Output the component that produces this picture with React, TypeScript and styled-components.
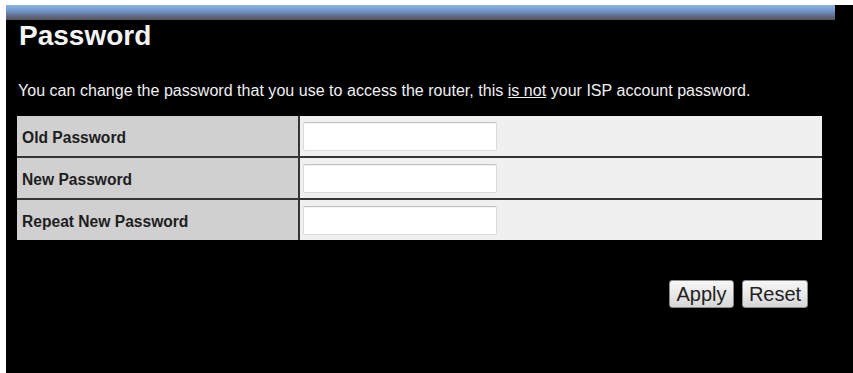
import React from "react";
import styled, { createGlobalStyle } from "styled-components";

const GlobalStyle = createGlobalStyle`
  html, body {
    margin: 0;
    padding: 0;
    background: #ffffff;
  }
  body {
    font-family: "Liberation Sans", Arial, sans-serif;
  }
`;

const Page = styled.div`
  box-sizing: border-box;
  padding: 5px 0 0 6px;
  height: 100vh;
  display: flex;
`;

const Panel = styled.div`
  flex: 1;
  background: #000;
  display: flex;
  flex-direction: column;
`;

const TopBar = styled.div`
  width: 829px;
  height: 15px;
  background: linear-gradient(to bottom, #8fb3e8 0%, #6e8fc4 45%, #5d6478 80%, #55565c 100%);
`;

const Title = styled.h1`
  margin: 2px 0 0 13px;
  font-size: 28px;
  line-height: 28px;
  font-weight: bold;
  color: #f4f4f4;
`;

const Intro = styled.p`
  margin: 32px 0 0 12px;
  font-size: 16px;
  line-height: 17px;
  color: #f0f0f0;
  letter-spacing: 0.03px;

  u {
    text-decoration: underline;
  }
`;

const FormTable = styled.div`
  margin: 17px 0 0 11px;
  width: 805px;
  display: grid;
  grid-template-columns: 281px 1fr;
  grid-auto-rows: 40px;
  gap: 2px;
  background: #353535;
`;

const Label = styled.div`
  background: #d0d0d0;
  color: #1e1e1e;
  font-size: 15.6px;
  font-weight: bold;
  display: flex;
  align-items: center;
  padding: 3px 0 0 5px;
`;

const Field = styled.div`
  background: #f0f0f0;
  display: flex;
  align-items: center;
  padding: 1px 0 0 3px;
`;

const TextInput = styled.input`
  box-sizing: border-box;
  width: 194px;
  height: 29px;
  border: 1px solid #dadada;
  border-top-color: #c2c2c2;
  border-radius: 2px;
  background: #fff;
  box-shadow: inset 0 1px 1px rgba(0, 0, 0, 0.06);
  outline: none;
`;

const Actions = styled.div`
  margin: 40px 45px 0 0;
  display: flex;
  justify-content: flex-end;
  gap: 8px;
`;

const Button = styled.button<{ $w: number }>`
  width: ${(p) => p.$w}px;
  height: 28px;
  padding: 0;
  font-family: "Liberation Sans", Arial, sans-serif;
  font-size: 20px;
  line-height: 26px;
  color: #222;
  border: 1px solid #8a8a8a;
  border-radius: 3px;
  background: linear-gradient(to bottom, #f6f6f6 0%, #e8e8e8 50%, #d6d6d6 100%);
`;

const rows = ["Old Password", "New Password", "Repeat New Password"];

export default function App() {
  return (
    <>
      <GlobalStyle />
      <Page>
        <Panel>
          <TopBar />
          <Title>Password</Title>
          <Intro>
            You can change the password that you use to access the router, this <u>is not</u> your ISP
            account password.
          </Intro>
          <FormTable>
            {rows.map((r) => (
              <React.Fragment key={r}>
                <Label>{r}</Label>
                <Field>
                  <TextInput type="password" />
                </Field>
              </React.Fragment>
            ))}
          </FormTable>
          <Actions>
            <Button $w={65}>Apply</Button>
            <Button $w={66}>Reset</Button>
          </Actions>
        </Panel>
      </Page>
    </>
  );
}
